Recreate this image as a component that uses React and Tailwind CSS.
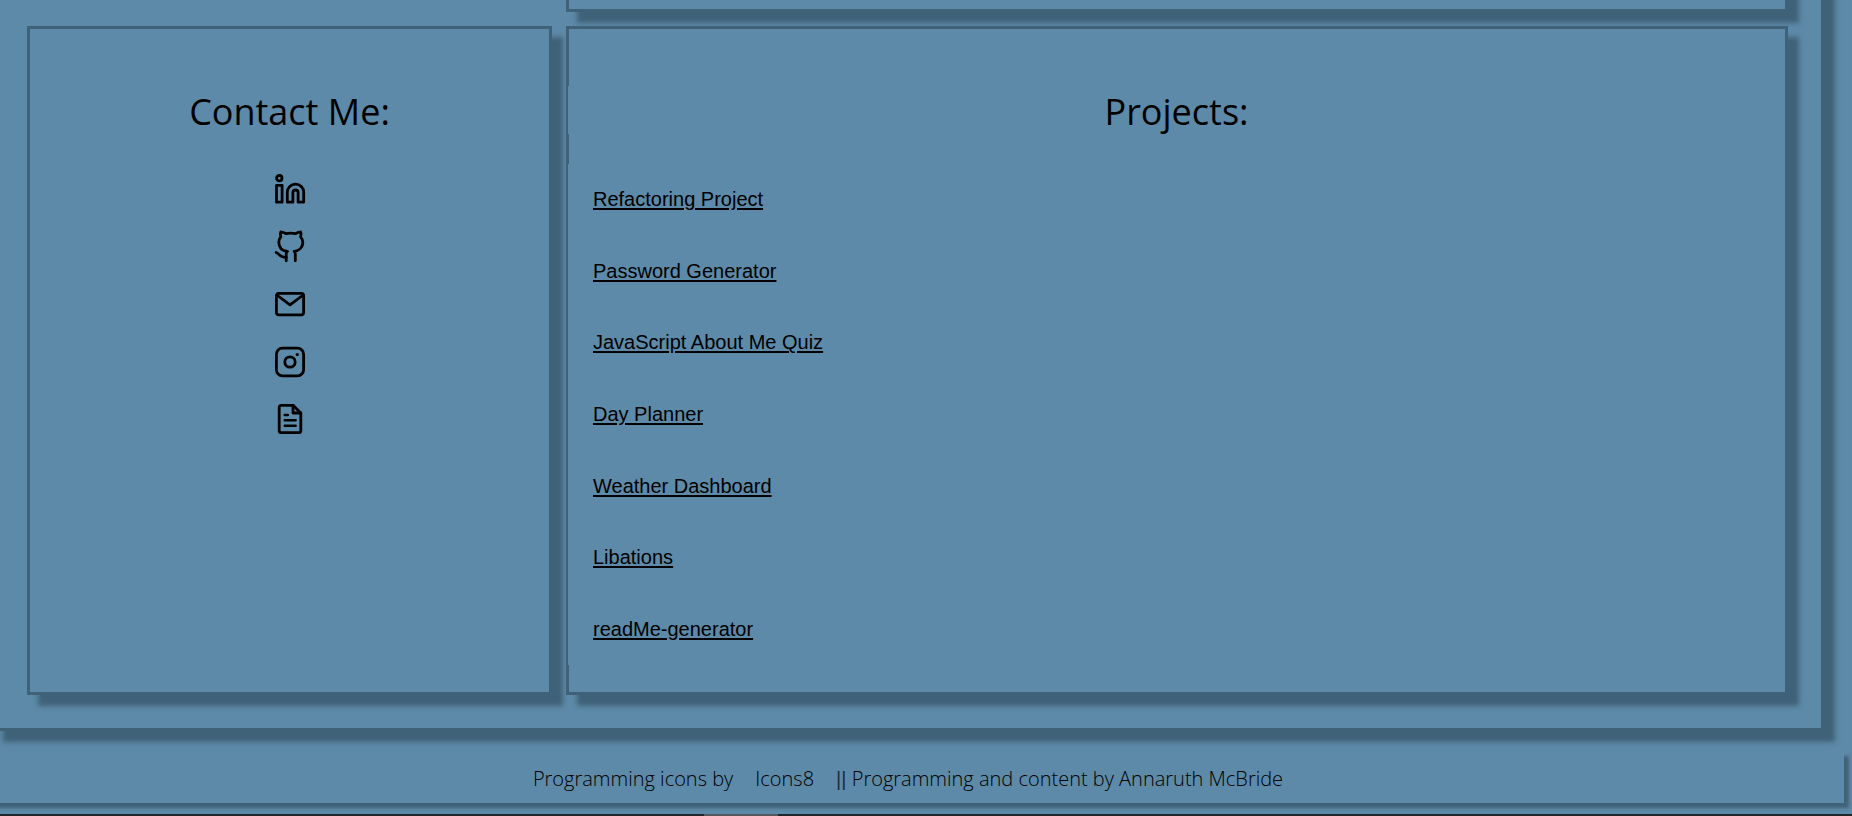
const card =
  "border-[3px] border-[#406278] bg-[#5d8aa8] shadow-[11px_11px_5px_#406278]";
const heading =
  "flex h-12 items-center justify-center bg-[#5d8aa8] pt-1 font-['Open_Sans',sans-serif] text-[36px] leading-[44px] font-medium";

const projects = [
  "Refactoring Project",
  "Password Generator",
  "JavaScript About Me Quiz",
  "Day Planner",
  "Weather Dashboard",
  "Libations",
  "readMe-generator",
];

function Icon({ children }) {
  return (
    <svg
      viewBox="0 0 30 30"
      className="size-[30px] overflow-visible"
      fill="none"
      stroke="currentColor"
      strokeWidth="2.8"
      strokeLinecap="round"
      strokeLinejoin="round"
      aria-hidden="true"
    >
      {children}
    </svg>
  );
}

const contacts = [
  {
    label: "LinkedIn",
    drawing: (
      <>
        <circle cx="4.3" cy="4.2" r="2.7" />
        <path d="M1.5 11.3H7.1V28.2H1.5Z" />
        <path d="M12.3 28.2V18.4a8.2 8.2 0 0 1 16.4 0V28.2H23.1V18.6a2.6 2.6 0 0 0-5.2 0V28.2Z" />
      </>
    ),
  },
  {
    label: "GitHub",
    drawing: (
      <>
        <path d="M11.2 29.8V23c0-1.4.3-2.1 1.2-2.7C7.4 19.7 3.8 16.6 3.8 11.2c0-2.3.8-4 2-5.4C5.3 4.2 5.3 2.5 5.8.8c2.1.2 3.7.9 5 1.9a24 24 0 0 1 9.8 0c1.3-1 2.9-1.7 5-1.9.5 1.7.5 3.4 0 5 1.2 1.4 2.2 3.1 2.2 5.4 0 5.4-3.8 8.5-8.7 9.1.9.6 1.2 1.3 1.2 2.7V29.8" />
        <path d="M1.2 21.5c3 .8 3.2 5.3 10 4.9" />
      </>
    ),
  },
  {
    label: "Email",
    drawing: (
      <>
        <rect x="1.4" y="4.4" width="27.2" height="21.4" rx="2.2" />
        <path d="M1.8 6 15 15.8 28.2 6" />
      </>
    ),
  },
  {
    label: "Instagram",
    drawing: (
      <>
        <rect x="1.4" y="1.2" width="27.2" height="27.6" rx="6" />
        <circle cx="15" cy="15" r="5.2" />
        <circle cx="22.3" cy="7.5" r="1.6" fill="currentColor" stroke="none" />
      </>
    ),
  },
  {
    label: "Resume",
    drawing: (
      <>
        <path d="M18 1.3H6.2a2 2 0 0 0-2 2V26.7a2 2 0 0 0 2 2H23.8a2 2 0 0 0 2-2V9Z" />
        <path d="M18 1.3V9H25.8" />
        <path d="M9.7 11h3.2M9.7 16.3h11M9.7 21.7h11" strokeWidth="2.4" />
      </>
    ),
  },
];

export default function App() {
  return (
    <div className="flex min-h-screen flex-col overflow-hidden bg-[#5d8aa8] text-black">
      <main className="-mt-6 mr-7 -ml-2 border-x-[3px] border-b-[3px] border-[#406278] pr-[33px] pb-[33px] pl-8 shadow-[11px_11px_5px_#406278]">
        <div className="grid grid-cols-[525fr_1222fr] gap-[14px]">
          <div className={`col-start-2 h-9 ${card}`} />

          <section className={`row-start-2 pt-[57px] pb-[27px] ${card}`}>
            <h2 className={heading}>Contact Me:</h2>
            <ul className="mt-[26px] grid h-72 grid-rows-5">
              {contacts.map((c) => (
                <li key={c.label} className="flex items-center justify-center">
                  <a href="#" aria-label={c.label}>
                    <Icon>{c.drawing}</Icon>
                  </a>
                </li>
              ))}
            </ul>
          </section>

          <section className={`row-start-2 pt-[57px] pb-[27px] ${card}`}>
            <h2 className={`-ml-px ${heading}`}>Projects:</h2>
            <ul className="mt-[30px] -ml-px grid min-h-[501px] grid-rows-7 bg-[#5d8aa8] pl-[25px] font-['Liberation_Sans',Arial,sans-serif] text-[20px] leading-6">
              {projects.map((name) => (
                <li key={name} className="flex items-center pb-px">
                  <a href="#" className="underline decoration-2 underline-offset-2">
                    {name}
                  </a>
                </li>
              ))}
            </ul>
          </section>
        </div>
      </main>

      <footer className="mt-5 mr-2 -ml-2 flex h-[52px] items-center justify-center gap-[22px] bg-[#5d8aa8] pt-1 pr-5 font-['Open_Sans',sans-serif] text-[20px] leading-7 font-light shadow-[5px_5px_3px_#406278]">
        <p>Programming icons by</p>
        <a href="#">Icons8</a>
        <p>
          <span className="font-['Liberation_Sans',Arial,sans-serif] text-black/70">||</span>{" "}
          Programming and content by Annaruth McBride
        </p>
      </footer>

      <div className="mt-auto flex h-[2px] bg-[#20272b]">
        <div className="ml-[38%] w-[4%] bg-[#55585c]" />
      </div>
    </div>
  );
}
